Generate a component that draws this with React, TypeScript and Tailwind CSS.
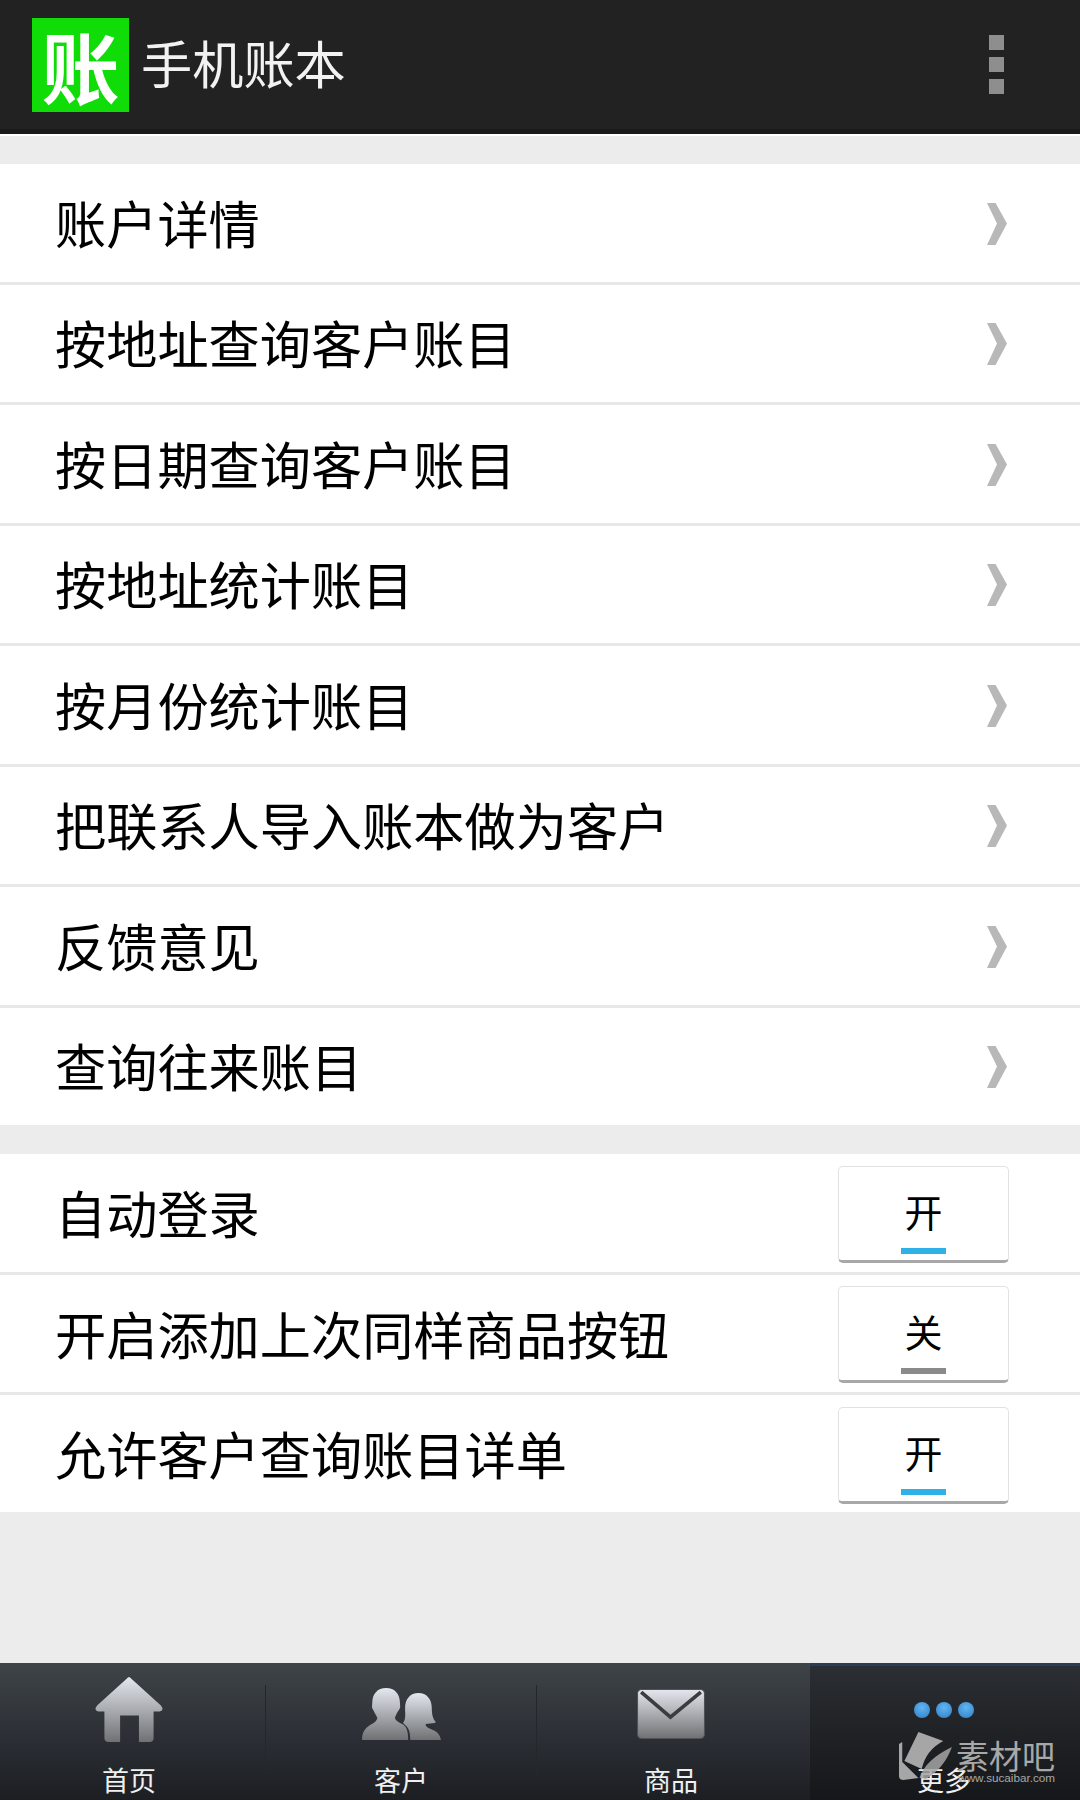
import type { ReactNode } from "react";

const cjk = "font-['Noto_Sans_CJK_SC','Noto_Sans',sans-serif]";

const menuItems = [
  "账户详情",
  "按地址查询客户账目",
  "按日期查询客户账目",
  "按地址统计账目",
  "按月份统计账目",
  "把联系人导入账本做为客户",
  "反馈意见",
  "查询往来账目",
];

const toggles = [
  { label: "自动登录", on: true },
  { label: "开启添加上次同样商品按钮", on: false },
  { label: "允许客户查询账目详单", on: true },
];

function Chevron() {
  return (
    <svg width="20" height="42" viewBox="0 0 21 42" preserveAspectRatio="none" className="shrink-0 mt-[2px]">
      <path d="M0 0 L9 0 L21 20.5 L9 42 L0 42 L10.5 20.5 Z" fill="#b8b8b8" />
    </svg>
  );
}

function IconGradient({ id }: { id: string }) {
  return (
    <defs>
      <linearGradient id={id} x1="0" y1="0" x2="0" y2="1">
        <stop offset="0" stopColor="#e4e7ee" />
        <stop offset="1" stopColor="#6f7174" />
      </linearGradient>
    </defs>
  );
}

function HomeIcon() {
  return (
    <svg width="68" height="65" viewBox="0 0 65 64" preserveAspectRatio="none">
      <IconGradient id="homeFill" />
      <path
        d="M32.5 0 Q33.5 0 34.5 1.5 L63 28 Q66.5 33 62 34 L56 34 L56 60 Q56 64 52 64 L42 64 L42 38 L24 38 L24 64 L13 64 Q9 64 9 60 L9 34 L3 34 Q-1.5 33 2 28 L30.5 1.5 Q31.5 0 32.5 0 Z"
        fill="url(#homeFill)"
      />
    </svg>
  );
}

function PeopleIcon() {
  return (
    <svg width="79" height="52" viewBox="0 0 77 52" preserveAspectRatio="none" className="mb-[2px]">
      <IconGradient id="peopleFill" />
      <path
        d="M23.5 0 C32 0 37 6 37 15 C37 18 38 19 36 22 C34 25 33 27 32 30 C33 33 36 34 39 36 C43 38 45 42 45 52 L0 52 C0 44 3 40 8 37 C11 35 14 34 15 30 C14 27 12 25 11 22 C9 19 10 18 10 15 C10 6 15 0 23.5 0 Z"
        fill="url(#peopleFill)"
      />
      <path
        d="M55 5 C63 5 68 11 68 20 C68 26 69 31 72 34 L71 35 L62 36 C62 39 65 40 69 42 C74 44 76 47 77 52 L47 52 C47 45 46 40 42 37 L40 35 C43 31 42 26 42 20 C42 11 47 5 55 5 Z"
        fill="url(#peopleFill)"
      />
    </svg>
  );
}

function MailIcon() {
  return (
    <svg width="68" height="50" viewBox="0 0 65 48" preserveAspectRatio="none" className="mb-[3px]">
      <IconGradient id="mailFill" />
      <rect x="0.5" y="0.5" width="64" height="47" rx="4" fill="url(#mailFill)" stroke="#505256" strokeWidth="1" />
      <path d="M4 3 L32 27 L61 3" fill="none" stroke="#3a3c40" strokeWidth="3.5" />
    </svg>
  );
}

function MoreDots() {
  return (
    <div className="flex gap-[6px]">
      <span className="w-[16px] h-[16px] rounded-full bg-[radial-gradient(circle_at_50%_35%,#62b4f2,#2f7fc4)]" />
      <span className="w-[16px] h-[16px] rounded-full bg-[radial-gradient(circle_at_50%_35%,#62b4f2,#2f7fc4)]" />
      <span className="w-[16px] h-[16px] rounded-full bg-[radial-gradient(circle_at_50%_35%,#62b4f2,#2f7fc4)]" />
    </div>
  );
}

function WatermarkLogo() {
  return (
    <svg width="54" height="48" viewBox="0 0 50 48" preserveAspectRatio="none" className="shrink-0">
      <path d="M18 0 L41 9 Q25 18 21 37 L5 29 Z" fill="#a6a6a6" />
      <path d="M0 12 L3 10 L3 30 L18 46 L4 48 Q0 48 0 44 Z" fill="#a6a6a6" />
      <path d="M49 15 Q42 36 25 47 L19 46 Q24 28 49 15 Z" fill="#a6a6a6" fillOpacity="0.85" />
    </svg>
  );
}

function Separator() {
  return <div className="w-[1px] h-[92px] mt-[22px] shrink-0 bg-[#24272b]" />;
}

function Tab({ label, icon, className }: { label: string; icon: ReactNode; className: string }) {
  return (
    <div className={`flex flex-col items-center shrink-0 ${className}`}>
      <div className="h-[79px] flex items-end justify-center">{icon}</div>
      <span className="mt-[20px] text-[27px] leading-[36px] text-[#f0f0f0]">{label}</span>
    </div>
  );
}

export default function App() {
  return (
    <div className={`w-[1080px] h-[1800px] flex flex-col bg-[#ececec] overflow-hidden ${cjk}`}>
      {/* Action bar */}
      <div className="h-[134px] shrink-0 flex items-center bg-[#222222] border-b-[5px] border-b-[#1a1a1a]">
        <div className="ml-[32px] w-[97px] h-[94px] bg-[#10dd08] flex items-center justify-center">
          <span className="text-[78px] leading-none font-bold text-white">账</span>
        </div>
        <span className="ml-[12px] mb-[4px] text-[51.2px] leading-none text-[#f2f2f2]">手机账本</span>
        <div className="ml-auto mr-[76px] flex flex-col gap-[7px]">
          <span className="w-[15px] h-[15px] bg-[#8e8e8e]" />
          <span className="w-[15px] h-[15px] bg-[#8e8e8e]" />
          <span className="w-[15px] h-[15px] bg-[#8e8e8e]" />
        </div>
      </div>
      <div className="h-[2px] shrink-0 bg-white" />

      {/* Menu list */}
      <div className="mt-[28px] bg-white flex flex-col">
        {menuItems.map((item, i) => (
          <div
            key={item}
            className={`flex items-center justify-between pl-[55px] pr-[73px] ${
              i < menuItems.length - 1 ? "h-[120.5px] border-b-[3px] border-[#e8e8e8]" : "h-[117.5px]"
            }`}
          >
            <span className="mb-[1px] text-[51.2px] leading-none text-black">{item}</span>
            <Chevron />
          </div>
        ))}
      </div>

      {/* Toggle list */}
      <div className="mt-[29px] bg-white flex flex-col">
        {toggles.map((row, i) => (
          <div
            key={row.label}
            className={`flex items-center justify-between pl-[55px] pr-[71px] ${
              i < toggles.length - 1 ? "h-[120.5px] border-b-[3px] border-[#e8e8e8]" : "h-[117px]"
            }`}
          >
            <span className="text-[51.2px] leading-none text-black">{row.label}</span>
            <div className="w-[171px] h-[97px] mt-[3px] rounded-[5px] bg-white border border-[#e2e2e2] border-b-[3px] border-b-[#a8a8a8] flex flex-col items-center">
              <span className="mt-[24px] text-[38px] leading-[40px] text-black">{row.on ? "开" : "关"}</span>
              <span className={`mt-[17px] w-[45px] h-[6px] ${row.on ? "bg-[#2eb1e6]" : "bg-[#8a8a8a]"}`} />
            </div>
          </div>
        ))}
      </div>

      {/* Bottom tabs */}
      <div className="mt-auto h-[137px] shrink-0 flex relative bg-gradient-to-b from-[#3f4448] via-[#2d3137] to-[#1c1e22]">
        <Tab label="首页" icon={<HomeIcon />} className="w-[265px] pr-[7px]" />
        <Separator />
        <Tab label="客户" icon={<PeopleIcon />} className="w-[270px]" />
        <Separator />
        <Tab label="商品" icon={<MailIcon />} className="w-[273px] pr-[5px]" />
        <div className="flex-1 pr-[2px] flex flex-col items-center bg-gradient-to-b from-[#2b2e32] to-[#15171a] border-t-[3px] border-[#2a3d55]">
          <div className="h-[52px] flex items-end justify-center">
            <MoreDots />
          </div>
          <span className="mt-[44px] text-[27px] leading-[36px] text-[#f0f0f0]">更多</span>
        </div>
        <div className="absolute left-[899px] top-[69px] flex gap-[3px]">
          <WatermarkLogo />
          <div className="flex flex-col items-end text-[#a8a8a8]">
            <span className="mt-[7px] text-[33px] leading-[33px]">素材吧</span>
            <span className="text-[11.7px] leading-[12px] font-['Liberation_Sans',sans-serif]">www.sucaibar.com</span>
          </div>
        </div>
      </div>
    </div>
  );
}
